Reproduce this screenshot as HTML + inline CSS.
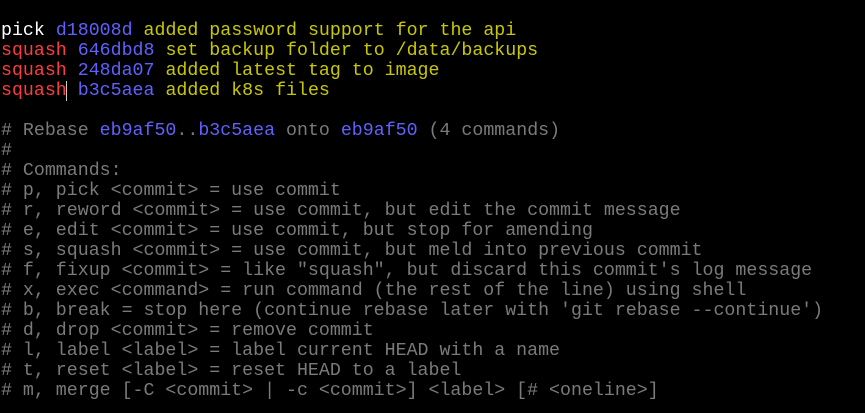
<!DOCTYPE html>
<html><head><style>
html,body{margin:0;padding:0;background:#000;width:865px;height:413px;overflow:hidden}
pre{margin:0;position:absolute;left:1px;top:21px;font-family:"Liberation Mono",monospace;font-size:18.27px;line-height:20px;color:#7a7a7a;white-space:pre}
.w{color:#fff}.r{color:#ff3b3b}.b{color:#6060ff}.y{color:#c8c800}.c{color:#7a7a7a}
.cur{border-left:1px solid #ccc;margin-left:-1px}
</style></head><body>
<pre><span class="w">pick</span> <span class="b">d18008d</span> <span class="y">added password support for the api</span>
<span class="r">squash</span> <span class="b">646dbd8</span> <span class="y">set backup folder to /data/backups</span>
<span class="r">squash</span> <span class="b">248da07</span> <span class="y">added latest tag to image</span>
<span class="r">squash</span><span class="cur"> </span><span class="b">b3c5aea</span> <span class="y">added k8s files</span>

# Rebase <span class="b">eb9af50</span>..<span class="b">b3c5aea</span> onto <span class="b">eb9af50</span> (4 commands)
#
# Commands:
# p, pick &lt;commit&gt; = use commit
# r, reword &lt;commit&gt; = use commit, but edit the commit message
# e, edit &lt;commit&gt; = use commit, but stop for amending
# s, squash &lt;commit&gt; = use commit, but meld into previous commit
# f, fixup &lt;commit&gt; = like "squash", but discard this commit's log message
# x, exec &lt;command&gt; = run command (the rest of the line) using shell
# b, break = stop here (continue rebase later with 'git rebase --continue')
# d, drop &lt;commit&gt; = remove commit
# l, label &lt;label&gt; = label current HEAD with a name
# t, reset &lt;label&gt; = reset HEAD to a label
# m, merge [-C &lt;commit&gt; | -c &lt;commit&gt;] &lt;label&gt; [# &lt;oneline&gt;]</pre>
</body></html>
